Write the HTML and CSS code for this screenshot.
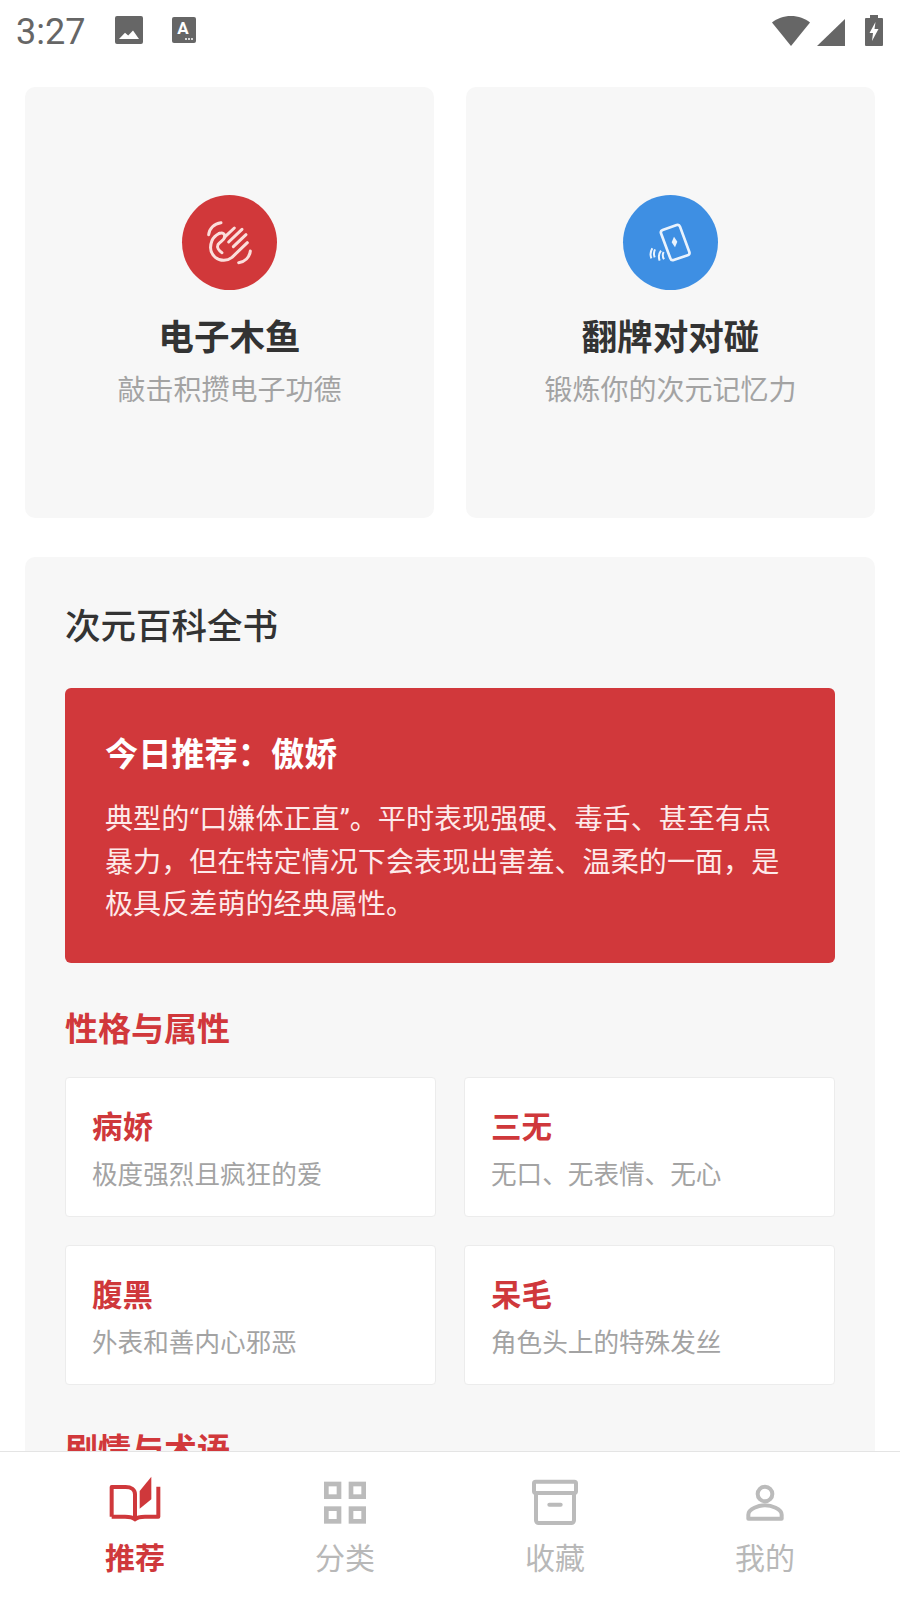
FILE: index.html
```html
<!DOCTYPE html>
<html lang="zh-CN">
<head>
    <meta charset="UTF-8">
    <meta name="viewport" content="width=device-width, initial-scale=1.0">
    <title>推荐</title>
    <link rel="stylesheet" href="styles.css">
</head>
<body>
<div class="app">
    <main class="content">
        <header class="status-bar">
            <span class="clock">3:27</span>
            <svg class="st-image" viewBox="0 0 28 28"><path fill="#666" fill-rule="evenodd" d="M2 0h24a2 2 0 0 1 2 2v24a2 2 0 0 1-2 2H2a2 2 0 0 1-2-2V2a2 2 0 0 1 2-2zM4 23h20l-6-8.500-4.800 5-3.200-2.800z"/></svg>
            <svg class="st-font" viewBox="0 0 24 26">
                <rect width="24" height="26" rx="2" fill="#666"/>
                <text x="11" y="17" class="st-font-a">A</text>
                <circle cx="14" cy="22" r="1" fill="#fff"/><circle cx="17" cy="22" r="1" fill="#fff"/><circle cx="20" cy="22" r="1" fill="#fff"/>
            </svg>
            <div class="status-right">
                <svg class="st-wifi" viewBox="0 0 38 30"><path fill="#666" d="M19 0C11.500 0 5 2.500 0 6.500L19 30 38 6.500C33 2.500 26.500 0 19 0z"/></svg>
                <svg class="st-signal" viewBox="0 0 28 27"><path fill="#666" d="M28 0v27H0z"/></svg>
                <svg class="st-battery" viewBox="0 0 18 31"><path fill="#666" fill-rule="evenodd" d="M5 0h8v3h4a1 1 0 0 1 1 1v26a1 1 0 0 1-1 1H1a1 1 0 0 1-1-1V4a1 1 0 0 1 1-1h4zM10.500 7 4.500 18h3.500l-1 8 6.500-12H9.500z"/></svg>
            </div>
        </header>

        <section class="game-row">
            <div class="game-card">
                <div class="game-icon red">
                    <svg viewBox="38 43 285 285" fill="none" stroke="#fbdedb" stroke-width="9" stroke-linecap="round" stroke-linejoin="round">
                        <path d="M118 162c2-18 16-33 37-36"/>
                        <path d="M208 246c18-2 33-16 35-35"/>
                        <path d="M150 158c-8 4-18 12-22 22-8 20-4 38 10 50 16 13 36 11 50 0l46-44"/>
                        <path d="M150 158c10-4 18 2 16 12-2 8-14 14-20 22-4 8 2 18 12 24"/>
                        <path d="M165 170l30-28"/>
                        <path d="M178 184l40-38"/>
                        <path d="M192 198l38-36"/>
                    </svg>
                </div>
                <h2 class="game-title">电子木鱼</h2>
                <p class="game-desc">敲击积攒电子功德</p>
            </div>
            <div class="game-card">
                <div class="game-icon blue">
                    <svg viewBox="38 43 285 285" fill="none" stroke="#eaf3fd" stroke-width="8" stroke-linejoin="round">
                        <path d="M152 158a8 8 0 0 1 5-10l42-15a8 8 0 0 1 10 5l28 76a8 8 0 0 1-5 10l-42 14a8 8 0 0 1-10-5z"/>
                        <path fill="#eaf3fd" stroke="none" d="M191 168l10 15-7 17-10-15z"/>
                        <path stroke-width="6" d="M126 203c-6 10-7 20-3 30"/>
                        <path stroke-width="6" d="M134 206c-4 8-4 16-1 24"/>
                        <path stroke-width="6" d="M152 210c-7 10-8 20-4 30"/>
                        <path stroke-width="6" d="M160 214c-4 7-3 15 1 22"/>
                    </svg>
                </div>
                <h2 class="game-title">翻牌对对碰</h2>
                <p class="game-desc">锻炼你的次元记忆力</p>
            </div>
        </section>

        <section class="wiki">
            <h2 class="wiki-title">次元百科全书</h2>
            <div class="today">
                <h3 class="today-title">今日推荐：傲娇</h3>
                <p class="today-text">典型的“口嫌体正直”。平时表现强硬、毒舌、甚至有点暴力，但在特定情况下会表现出害羞、温柔的一面，是极具反差萌的经典属性。</p>
            </div>

            <h3 class="group-title">性格与属性</h3>
            <div class="term-grid">
                <div class="term">
                    <h4 class="term-name">病娇</h4>
                    <p class="term-desc">极度强烈且疯狂的爱</p>
                </div>
                <div class="term">
                    <h4 class="term-name">三无</h4>
                    <p class="term-desc">无口、无表情、无心</p>
                </div>
                <div class="term">
                    <h4 class="term-name">腹黑</h4>
                    <p class="term-desc">外表和善内心邪恶</p>
                </div>
                <div class="term">
                    <h4 class="term-name">呆毛</h4>
                    <p class="term-desc">角色头上的特殊发丝</p>
                </div>
            </div>

            <h3 class="group-title next">剧情与术语</h3>
        </section>
    </main>

    <nav class="tabbar">
        <a class="tab active">
            <svg viewBox="315 156 180 180" fill="none" stroke="#cf383b" stroke-width="12" stroke-linejoin="round">
                <path d="M335 290V201h42c16 0 28 8 28 22v70"/>
                <path d="M335 290h40c14 0 24 2 30 8 6-6 16-8 30-8h40v-90"/>
                <path fill="#cf383b" stroke="none" d="M419 213 454 170v68l-35 28z"/>
            </svg>
            <span>推荐</span>
        </a>
        <a class="tab">
            <svg viewBox="945 156 180 180" fill="none" stroke="#bbb" stroke-width="14">
                <rect x="979" y="192" width="38" height="38"/>
                <rect x="1053" y="192" width="38" height="38"/>
                <rect x="979" y="266" width="38" height="38"/>
                <rect x="1053" y="266" width="38" height="38"/>
            </svg>
            <span>分类</span>
        </a>
        <a class="tab">
            <svg viewBox="225 156 180 180" fill="none" stroke="#bbb" stroke-width="12" stroke-linejoin="round" stroke-linecap="round">
                <rect x="252" y="185" width="126" height="34" rx="5"/>
                <path d="M258 219v82a8 8 0 0 0 8 8h98a8 8 0 0 0 8-8v-82"/>
                <path d="M298 254h34"/>
            </svg>
            <span>收藏</span>
        </a>
        <a class="tab">
            <svg viewBox="855 156 180 180" fill="none" stroke="#bbb" stroke-width="12" stroke-linejoin="round">
                <circle cx="945" cy="222" r="22"/>
                <path d="M895 296v-12c0-18 32-28 50-28s50 10 50 28v12z"/>
            </svg>
            <span>我的</span>
        </a>
    </nav>
</div>
</body>
</html>
```

FILE: styles.css
```css
* {
    box-sizing: border-box;
}
html, body {
    margin: 0;
    padding: 0;
}
body {
    font-family: Roboto, "Noto Sans CJK SC", sans-serif;
    background-color: #fff;
    color: #333;
}
h2, h3, h4, p {
    margin: 0;
}
.app {
    display: flex;
    flex-direction: column;
    height: 1600px;
    overflow: hidden;
}
.content {
    flex: 1;
    min-height: 0;
    overflow: hidden;
    padding: 0 25px;
}

/* status bar */
.status-bar {
    display: flex;
    align-items: center;
    height: 87px;
    margin: 0 -25px;
    padding: 0 17px 27px 16px;
    color: #666;
}
.clock {
    font-size: 36px;
    width: 99px;
    margin-top: 4px;
}
.st-image {
    width: 28px;
    height: 28px;
}
.st-font {
    width: 24px;
    height: 26px;
    margin-left: 29px;
}
.st-font-a {
    font-family: Roboto, sans-serif;
    font-size: 17px;
    font-weight: 700;
    fill: #fff;
    text-anchor: middle;
}
.status-right {
    display: flex;
    align-items: flex-end;
    margin-left: auto;
    height: 31px;
}
.st-wifi {
    width: 38px;
    height: 30px;
}
.st-signal {
    width: 28px;
    height: 27px;
    margin-left: 7px;
}
.st-battery {
    width: 18px;
    height: 31px;
    margin-left: 20px;
}

/* top cards */
.game-row {
    display: grid;
    grid-template-columns: 1fr 1fr;
    gap: 32px;
}
.game-card {
    display: flex;
    flex-direction: column;
    align-items: center;
    height: 431px;
    padding-top: 108px;
    background-color: #f7f7f7;
    border-radius: 10px;
}
.game-icon {
    width: 95px;
    height: 95px;
    border-radius: 50%;
}
.game-icon svg {
    display: block;
    width: 95px;
    height: 95px;
}
.red {
    background-color: #d1383a;
}
.blue {
    background-color: #3e8fe3;
}
.game-title {
    margin-top: 24px;
    font-size: 35.600px;
    line-height: 48px;
    font-weight: 700;
}
.game-desc {
    margin-top: 9px;
    font-size: 28px;
    line-height: 40px;
    color: #a3a3a3;
}

/* wiki block */
.wiki {
    margin-top: 39px;
    padding: 46px 40px 60px;
    background-color: #f7f7f7;
    border-radius: 10px;
}
.wiki-title {
    font-size: 35.500px;
    line-height: 48px;
    font-weight: 500;
}
.today {
    margin-top: 37px;
    padding: 44px 40px 37px 40px;
    height: 275px;
    background-color: #d1383b;
    border-radius: 6px;
    color: #fff;
}
.today-title {
    font-size: 33.200px;
    line-height: 46px;
    font-weight: 700;
}
.today-text {
    margin-top: 21px;
    max-width: 686px;
    font-size: 28.100px;
    line-height: 42.500px;
    color: #fdeaea;
}
.group-title {
    margin-top: 44px;
    font-size: 33px;
    line-height: 46px;
    font-weight: 700;
    color: #d1383b;
}
.group-title.next {
    margin-top: 43px;
}
.term-grid {
    display: grid;
    grid-template-columns: 1fr 1fr;
    gap: 28px;
    margin-top: 24px;
}
.term {
    height: 140px;
    padding: 29px 26px 0;
    background-color: #fff;
    border: 1px solid #ececec;
    border-radius: 4px;
}
.term-name {
    font-size: 30.500px;
    line-height: 42px;
    font-weight: 700;
    color: #cf383b;
}
.term-desc {
    margin-top: 8px;
    font-size: 25.600px;
    line-height: 36px;
    color: #a3a3a3;
}

/* bottom tabs */
.tabbar {
    display: grid;
    grid-template-columns: repeat(4, 1fr);
    height: 149px;
    padding: 20px 30px 0;
    background-color: #fff;
    border-top: 1px solid #e4e4e4;
}
.tab {
    display: flex;
    flex-direction: column;
    align-items: center;
    color: #b8b8b8;
    font-size: 30px;
    line-height: 42px;
}
.tab svg {
    width: 60px;
    height: 60px;
    margin-bottom: 6px;
}
.tab.active {
    color: #cf383b;
    font-weight: 700;
}
```
